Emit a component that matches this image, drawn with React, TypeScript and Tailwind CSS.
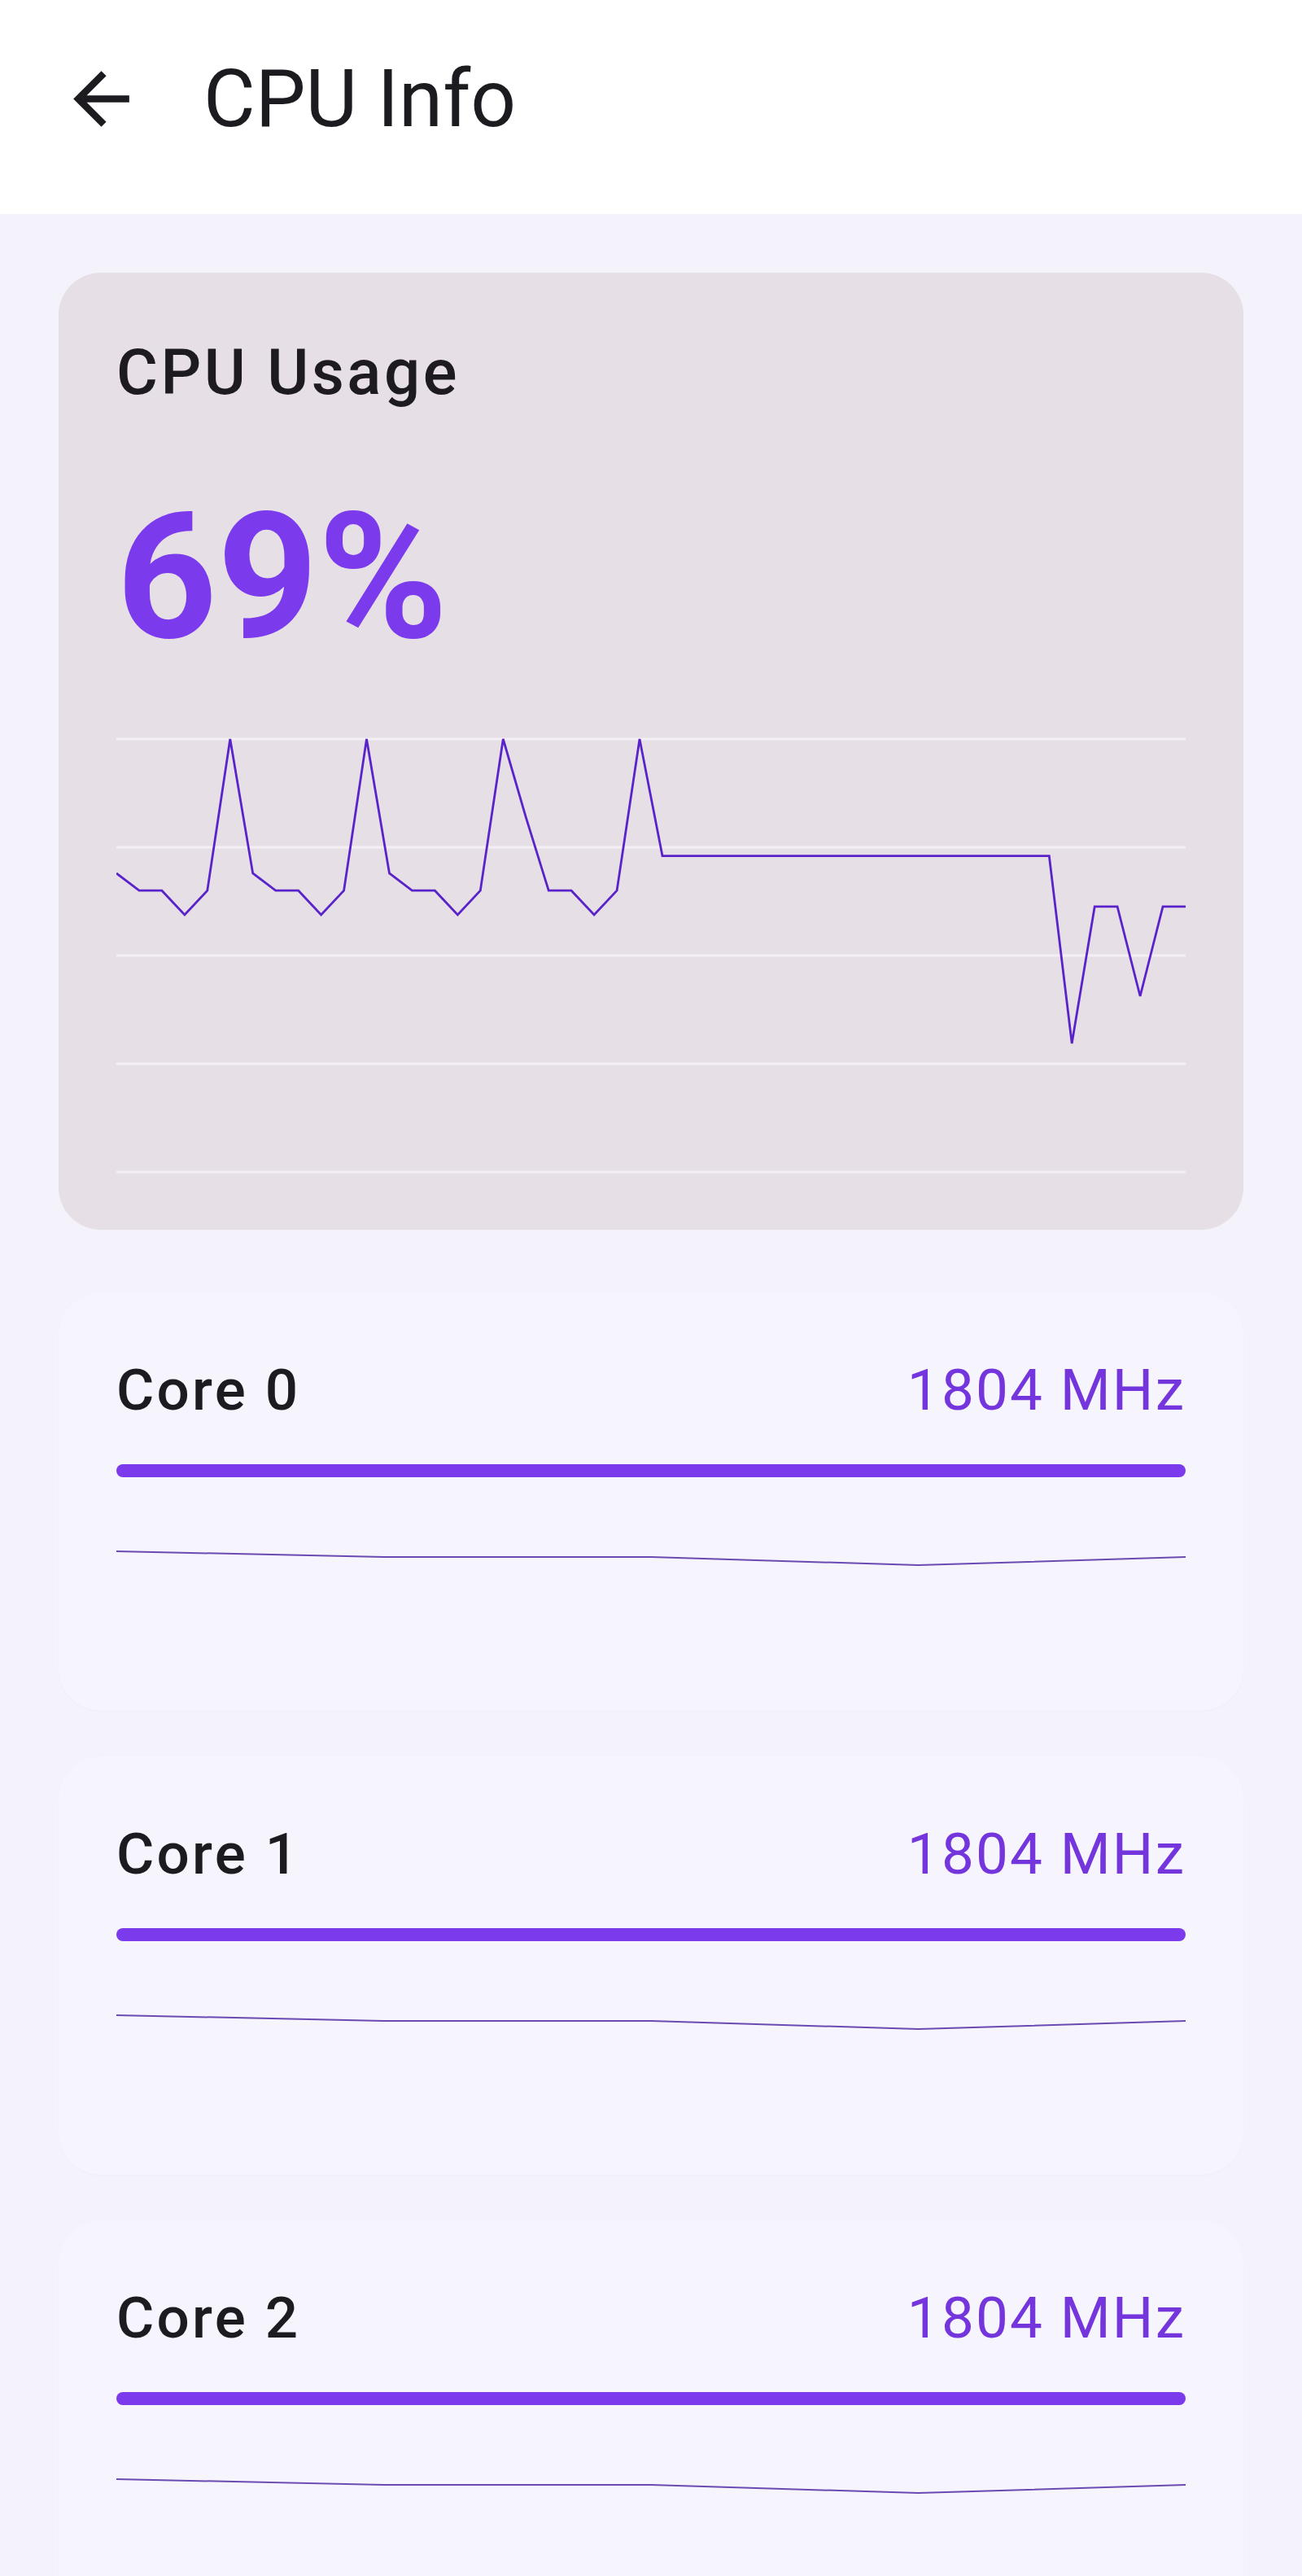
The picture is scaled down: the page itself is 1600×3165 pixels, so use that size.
const usage = [
  69, 65, 65, 59.4, 65, 100, 69, 65, 65, 59.4, 65, 100, 69, 65, 65, 59.4, 65, 100, 82, 65, 65, 59.4, 65,
  100, 73, 73, 73, 73, 73, 73, 73, 73, 73, 73, 73, 73, 73, 73, 73, 73, 73, 73, 29.7, 61.3, 61.3, 40.6,
  61.3, 61.3,
];

const coreLine = [51, 58, 58, 68, 58];

const CHART_W = 1314;

const UsageChart = () => {
  const step = CHART_W / (usage.length - 1);
  const pts = usage.map((v, i) => `${(i * step).toFixed(1)},${(537 - (v / 100) * 532).toFixed(1)}`).join(" ");
  return (
    <svg width={CHART_W} height={545} viewBox={`0 0 ${CHART_W} 545`} className="block mt-[85px]">
      {[5, 138, 271, 404, 537].map((y) => (
        <line key={y} x1={0} x2={CHART_W} y1={y} y2={y} stroke="#f3eff4" strokeWidth={3} />
      ))}
      <polyline points={pts} fill="none" stroke="#5a22c9" strokeWidth={2.8} strokeLinejoin="miter" />
    </svg>
  );
};

const CoreLine = () => {
  const step = CHART_W / (coreLine.length - 1);
  const pts = coreLine.map((y, i) => `${(i * step).toFixed(1)},${y}`).join(" ");
  return (
    <svg width={CHART_W} height={150} viewBox={`0 0 ${CHART_W} 150`} className="block mt-[40px]">
      <polyline points={pts} fill="none" stroke="#6a4bb3" strokeWidth={2} />
    </svg>
  );
};

const CoreCard = ({ name, mhz }: { name: string; mhz: number }) => (
  <div className="mx-[72px] mb-[56px] rounded-[52px] bg-[#f6f4fc] px-[71px] pt-[84px] pb-[97px] shadow-[0_1px_3px_rgba(60,40,90,0.025)]">
    <div className="flex justify-between items-start">
      <span className="text-[71px] leading-none font-medium tracking-[0.045em] text-[#1c1b1f]">{name}</span>
      <span className="text-[71px] leading-none tracking-[0.03em] text-[#7435dd]">{mhz} MHz</span>
    </div>
    <div className="mt-[56px] h-[16px] rounded-full bg-[#7c3aed]" />
    <CoreLine />
  </div>
);

export default function App() {
  return (
    <div className="min-h-screen bg-[#f4f2fb] font-['Roboto','Noto_Sans',sans-serif]">
      <header className="h-[263px] bg-white flex items-start pt-[70px] pl-[73px]">
        <div className="flex items-center h-[103px]">
          <svg width={103} height={103} viewBox="0 0 24 24" className="text-[#1c1b1f]">
            <path fill="currentColor" d="M20 11H7.83l5.59-5.59L12 4l-8 8 8 8 1.41-1.41L7.83 13H20v-2z" />
          </svg>
          <h1 className="ml-[74px] text-[98px] leading-none font-normal text-[#1c1b1f]">CPU Info</h1>
        </div>
      </header>

      <section className="mt-[72px] mx-[72px] rounded-[52px] bg-[#e6e0e6] px-[71px] pt-[84px] pb-[63px]">
        <h2 className="text-[78px] leading-none font-medium tracking-[0.045em] text-[#1d1b20]">CPU Usage</h2>
        <div className="mt-[105px] text-[216px] leading-none font-bold text-[#7c3aed]">69%</div>
        <UsageChart />
      </section>

      <div className="mt-[77px]">
        <CoreCard name="Core 0" mhz={1804} />
        <CoreCard name="Core 1" mhz={1804} />
        <CoreCard name="Core 2" mhz={1804} />
      </div>
    </div>
  );
}
